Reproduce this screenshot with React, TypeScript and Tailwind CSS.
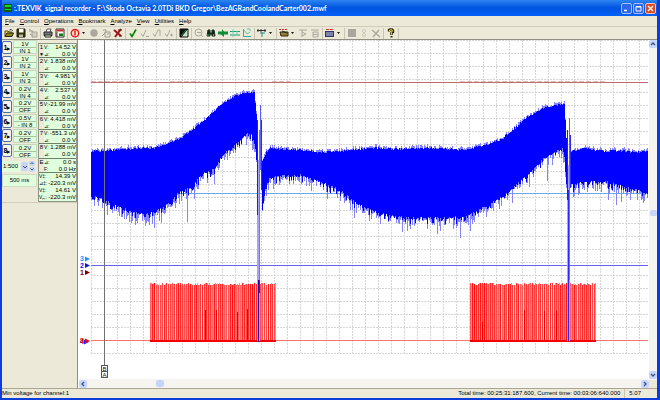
import { useMemo, useState } from "react";
import type { ReactNode } from "react";

type Point = [number, number];

const menus = ["File", "Control", "Operations", "Bookmark", "Analyze", "View", "Utilities", "Help"];

const channels = [
  { range: "1V", input: "IN 1" },
  { range: "1V", input: "IN 2" },
  { range: "1V", input: "IN 3" },
  { range: "0.2V", input: "IN 4" },
  { range: "0.2V", input: "OFF" },
  { range: "0.5V", input: "- IN 8" },
  { range: "0.2V", input: "OFF" },
  { range: "0.2V", input: "OFF" },
];

const readings = [
  { id: "1", top: ["V:", "14.52 V"], bottom: ["⊿:", "0.0 V"] },
  { id: "2", top: ["V:", "1.838 mV"], bottom: ["⊿:", "0.0 V"] },
  { id: "3", top: ["V:", "4.981 V"], bottom: ["⊿:", "0.0 V"] },
  { id: "4", top: ["V:", "2.537 V"], bottom: ["⊿:", "0.0 V"] },
  { id: "5", top: ["V:", "-21.99 mV"], bottom: ["⊿:", "0.0 V"] },
  { id: "6", top: ["V:", "4.418 mV"], bottom: ["⊿:", "0.0 V"] },
  { id: "7", top: ["V:", "-551.3 uV"], bottom: ["⊿:", "0.0 V"] },
  { id: "8", top: ["V:", "1.288 mV"], bottom: ["⊿:", "0.0 V"] },
  { id: "E", top: ["⊿:", "0.0 s"], bottom: ["F:", "0.0 Hz"] },
];

const extremes = [
  ["V‡:", "14.39 V"],
  ["⊿‡:", "-220.3 mV"],
  ["V‡:", "14.61 V"],
  ["Vₘ:", "-220.3 mV"],
];

// Envelope of the noisy blue channel, in chart units
const upper: Point[][] = [
  [[91, 152], [117, 151], [140, 149], [155, 149], [165, 145], [178, 141], [190, 132], [205, 121], [220, 106], [235, 97], [245, 94], [254, 93], [256, 115], [258, 165]],
  [[262, 162], [266, 153], [270, 149], [280, 150], [300, 151], [320, 153], [345, 152], [370, 149], [400, 150], [430, 149], [465, 151], [485, 146], [500, 141], [510, 133], [527, 118], [543, 109], [555, 106], [564, 105], [566, 138], [567, 170]],
  [[571, 153], [585, 149], [600, 152], [620, 152], [635, 153], [648, 152]],
];
const lower: Point[][] = [
  [[91, 195], [104, 198], [110, 203], [130, 210], [145, 214], [152, 212], [170, 201], [180, 190], [190, 187], [200, 175], [210, 168], [214, 169], [222, 154], [235, 144], [245, 134], [250, 132], [254, 138], [256, 160], [258, 180]],
  [[262, 209], [265, 188], [270, 176], [280, 175], [300, 174], [320, 181], [335, 187], [345, 193], [355, 202], [370, 209], [380, 213], [400, 216], [430, 217], [465, 216], [475, 210], [500, 197], [510, 189], [527, 174], [543, 158], [555, 151], [563, 147], [565, 165], [567, 196]],
  [[571, 184], [585, 181], [600, 180], [620, 184], [635, 188], [648, 194]],
];

const longSpikes: Point[] = [
  [154, 228], [146, 223], [187, 222], [194, 199], [107, 215], [437, 234], [440, 231], [460, 238],
  [453, 229], [470, 231], [474, 222], [547, 181], [529, 187], [616, 205], [512, 203], [574, 196],
];

function makeRandom(seed: number) {
  let s = seed;
  return () => {
    s = (s * 16807) % 2147483647;
    return s / 2147483647;
  };
}

function valueAt(points: Point[], x: number) {
  for (let i = 1; i < points.length; i++) {
    const [x1, y1] = points[i - 1];
    const [x2, y2] = points[i];
    if (x <= x2) return y1 + ((y2 - y1) * (x - x1)) / (x2 - x1);
  }
  return points[points.length - 1][1];
}

function buildWave() {
  const rand = makeRandom(4217);
  let solid = "";
  let fringe = "";
  upper.forEach((top, part) => {
    const bottom = lower[part];
    const end = top[top.length - 1][0];
    for (let x = top[0][0]; x < end; x++) {
      const y1 = Math.round(valueAt(top, x) - rand() * 2);
      const y2 = Math.round(valueAt(bottom, x) + rand() * rand() * 9);
      solid += `M${x} ${y1}h1V${y2}h-1z`;
      fringe += `M${x} ${y1 - Math.round(rand() * 3)}h1V${y2 + Math.round(rand() * rand() * 13)}h-1z`;
    }
  });
  longSpikes.forEach(([x, y]) => {
    fringe += `M${x} ${y - 35}h1V${y}h-1z`;
  });
  return { solid, fringe };
}

function buildPulses(start: number, end: number, seed: number) {
  const rand = makeRandom(seed);
  const bars: { x: number; y: number; opacity: number }[] = [];
  for (let x = start; x < end; x++) {
    const edge = (x - start) % 2 === 0;
    const gap = !edge && rand() > 0.68;
    const y = 283 + Math.round(rand() * 2);
    bars.push({ x, y, opacity: gap ? 0.15 : edge ? 0.6 + rand() * 0.35 : 0.45 });
  }
  return bars;
}

const columns = Array.from({ length: 43 }, (_, i) => Math.round(91 + i * 13.05) + 0.5);
const rows = Array.from({ length: 25 }, (_, i) => Math.round(40 + i * 13.05) + 0.5);

function Chart() {
  const wave = useMemo(buildWave, []);
  const pulses = useMemo(
    () => [...buildPulses(150, 276, 31), ...buildPulses(470, 596, 77)],
    []
  );

  return (
    <svg viewBox="79 40 570 339" preserveAspectRatio="xMinYMin meet" className="block w-full" shapeRendering="crispEdges">
      <g stroke="#d6d6d6" strokeDasharray="2 1">
        {columns.map((x) => (
          <path key={x} d={`M${x} 40V353`} />
        ))}
        {rows.map((y) => (
          <path key={y} d={`M91 ${y}H649`} />
        ))}
      </g>
      <path d="M91 82.5H648" stroke="#c06c6c" />
      <path d="M91 81.5H140M170 81.5h30M272 81.5h20M460 81.5H606" stroke="#e2b8b8" strokeDasharray="5 2" />
      <path d="M91 193.5H648" stroke="#6aa9ea" />
      <path d="M91 265.5H648" stroke="#6464f0" />
      <path d="M91 340.5H648" stroke="#ff7070" />
      <path d="M150 341H276M470 341H596" stroke="#f00000" strokeWidth="2" />
      {pulses.map((bar) => (
        <rect key={bar.x} x={bar.x} y={bar.y} width="1" height={341 - bar.y} fill="#ff0000" opacity={bar.opacity} />
      ))}
      <path d="M205.500 310V341M216.500 310V341M237.500 312V341M247.500 309V341M482.500 322V341M524.500 310V341M544.500 311V341M556.500 311V341" stroke="#ee0000" />
      <path d={wave.fringe} fill="#8484ff" />
      <path d={wave.solid} fill="#0000ff" />
      <path d="M257 160h3V341h-3zM567 165h3V341h-3z" fill="#a4a4ff" />
      <path d="M257.500 120V215M567.500 130V200" stroke="#1c1cff" />
      <path d="M259.500 130V280M569.500 130V280" stroke="#7070fa" />
      <path d="M260.500 105V170M569.500 118V165" stroke="#5c5cff" />
      <path d="M261.500 120V190M570.500 135V188M568.500 190V341" stroke="#2828ff" />
      <path d="M259 280V293" stroke="#2020ff" strokeWidth="2" />
      <path d="M258.500 280V342" stroke="#3000b0" />
      <path d="M104.500 40V366" stroke="#707070" />
      <g fill="#ffffff" stroke="#555555">
        <rect x="101.500" y="365.500" width="6" height="6" />
        <rect x="101.500" y="371.500" width="6" height="6" />
      </g>
      <g fontFamily="Liberation Sans, sans-serif" fontSize="6" fill="#111111" textAnchor="middle">
        <text x="104.500" y="371">B</text>
        <text x="104.500" y="377">A</text>
      </g>
      <g fontFamily="Liberation Sans, sans-serif" fontSize="7" fontWeight="700">
        <text x="80" y="261" fill="#1e90ff">3</text>
        <text x="80" y="268" fill="#1414d8">2</text>
        <text x="80" y="275" fill="#7a0000">1</text>
        <text x="80" y="344" fill="#2020ff">4</text>
        <text x="80" y="343" fill="#ff0000">8</text>
      </g>
      <g shapeRendering="auto">
        <path d="M85 256.500l5 2.500-5 2.500z" fill="#1e90ff" />
        <path d="M85 263l5 2.500-5 2.500z" fill="#1414d8" />
        <path d="M85 270l5 2.500-5 2.500z" fill="#7a0000" />
        <path d="M84 339.500l5 2.500-5 2.500z" fill="#2020ff" />
        <path d="M85 338.500l5 2.500-5 2.500z" fill="#ff0000" />
      </g>
    </svg>
  );
}

function Icon({ children }: { children: ReactNode }) {
  return (
    <svg viewBox="0 0 10 10" className="block h-[10px] w-[10px]" fill="none" strokeWidth="1">
      {children}
    </svg>
  );
}

type Tool = { name: string; icon: ReactNode; menu?: boolean };

const check = "M2 5.500l2 3L8 1.500";
const grayCheck = "M1 5.500l2 3L6 2";

const toolGroups: Tool[][] = [
  [
    { name: "Open", icon: <><path d="M1 8.500V3h3l1 1h3v1.500" fill="#e8d870" stroke="#50500a" /><path d="M1 8.500l2-3.500h6.500L8 8.500z" fill="#908020" stroke="#2c2c08" /><path d="M5.500 2q2-1.500 3 .8" stroke="#222" /></> },
    { name: "Save", icon: <><path d="M1 1h8v8H1z" fill="#34340c" stroke="#202008" /><path d="M3 1h4.500v3.500H3z" fill="#fff" /><path d="M3 6.500h4V9H3z" fill="#b8b8a8" /></> },
    { name: "Export", icon: <><path d="M4 4h5v5H4zM1 3h4M2 6l3 2" fill="#d4d0c4" stroke="#a5a397" /><path d="M1 1l4 3" stroke="#a5a397" /></> },
  ],
  [
    { name: "Print", icon: <><path d="M3 4l1-3h4L7 4" fill="#fff" stroke="#555" /><path d="M1 4h8v3.500H1z" fill="#787878" stroke="#252525" /><path d="M2 7h6v2H2z" fill="#e0e0b0" stroke="#333" /></> },
    { name: "Save picture", icon: <><path d="M1 1h8v8H1z" fill="#fff" stroke="#333" /><path d="M1.500 2.500h7" stroke="#c03030" strokeWidth="2" /><path d="M4 5.500h4V8H4z" fill="#187818" /><path d="M2 4v5" stroke="#604020" /></> },
  ],
  [
    { name: "Stop", menu: true, icon: <><circle cx="5" cy="5.200" r="3.700" stroke="#f01414" strokeWidth="1.400" /><path d="M5 2.500v5" stroke="#f01414" strokeWidth="1.500" /></> },
    { name: "Record", icon: <circle cx="5" cy="5" r="3.700" fill="#aaa89d" /> },
    { name: "Copy", icon: <path d="M4 4h5v5H4zM2 2h3v3M1 8l3-3M6 6h2" stroke="#9c9a90" /> },
    { name: "Delete", icon: <><path d="M1 2l7 6M8 1L2 9" stroke="#a01414" strokeWidth="2" /><path d="M5 2h4M6 8h3" stroke="#5c1818" /></> },
  ],
  [
    { name: "Accept", icon: <path d={check} stroke="#128812" strokeWidth="1.700" /> },
    { name: "Accept previous", icon: <path d={`${grayCheck}M6 8.500h3`} stroke="#aaa89d" /> },
    { name: "Accept all", icon: <path d={`${grayCheck}M6 2h2v6`} stroke="#aaa89d" /> },
    { name: "Accept next", icon: <path d={`${grayCheck}M6 7h3M7.500 5.500v3`} stroke="#aaa89d" /> },
  ],
  [{ name: "Invert", icon: <><path d="M1 1h8v8H1z" fill="#10100c" stroke="#111" /><path d="M8.500 1.500v7H3z" fill="#c4e4c0" /><path d="M2 8l5-6" stroke="#168046" /></> }],
  [
    { name: "Zoom out", icon: <><circle cx="4.500" cy="4.500" r="3.500" stroke="#aaa89d" /><path d="M3 4.500h4M7 7l2 2" stroke="#aaa89d" /></> },
    { name: "Find", icon: <><path d="M2 2h2v3h2V2h2l1 6H6V6H4v2H1z" fill="#14281c" stroke="#123020" /><path d="M2 6v2M7.500 6v2" stroke="#30b060" /></> },
    { name: "Jump", icon: <path d="M0 3.500h4V1l2 2.500h4v3H6V9L3 6.500H0z" fill="#108c38" /> },
    { name: "Levels", icon: <><path d="M0 3.500h10M0 7h10" stroke="#1e9c60" /><path d="M3 1v8M7 3v5" stroke="#62d6ce" /></> },
    { name: "Plot", icon: <><path d="M1.500 1v8M1 8.500h8" stroke="#30aca0" /><path d="M2 2l3 4 3-2M5 1h3v2" stroke="#5cc8a8" /></> },
  ],
  [{ name: "Measure", menu: true, icon: <><path d="M0 2.500h9M1 1v3M4 1v3M8 1v3" stroke="#343434" /><path d="M3 5h5M5 4v5" stroke="#338c8c" /></> }],
  [
    { name: "Markers", menu: true, icon: <><path d="M0 1.500h9" stroke="#d43030" strokeDasharray="2 1" /><path d="M1 4h8v4H2z" fill="#928030" stroke="#33280c" /><path d="M3 3l5 2" stroke="#222" /></> },
    { name: "Marker flag", icon: <path d="M1 2h8M4 2v7M4 4l4 2-4 2" stroke="#aaa89d" /> },
    { name: "Marker list", icon: <path d="M1 2h8M3 4h5v5H3zM3 6.500h5" stroke="#aaa89d" /> },
  ],
  [{ name: "Table", menu: true, icon: <><path d="M1 1.500h8" stroke="#d43030" strokeDasharray="3 1" /><path d="M0 3h9v6H0z" fill="#303468" /><path d="M1 5h7M1 7h7" stroke="#c8d0ec" /></> }],
  [
    { name: "Halt", icon: <path d="M1 1h8v8H1z" fill="#aaa89d" /> },
    { name: "Select", icon: <path d="M3 2h4M3 8h4M3 3l4 4M7 3L3 7" stroke="#c8c6ba" /> },
    { name: "Clear", icon: <path d="M1 2l8 7M8 2L2 9" stroke="#aaa89d" strokeWidth="1.300" /> },
  ],
  [{ name: "Help", icon: <><path d="M3 3.500V2l1-.5h2l1 1V4L5.500 5v2" stroke="#2c2800" strokeWidth="2.400" /><path d="M3.500 3V2l1-.2h1.500l.5 1-1 1.700v2" stroke="#f0dc20" /><path d="M4.500 8h2v1.500h-2z" fill="#2c2800" /></> }],
];

function TitleBar() {
  return (
    <header className="flex h-4 items-center bg-linear-to-b from-[#2c84f0] via-[#0053e1] to-[#0562f8] pl-[2px] pr-px text-white">
      <svg viewBox="0 0 8 8" className="h-2 w-2 shrink-0">
        <path d="M0 0h8v8H0z" fill="#0a5c14" />
        <path d="M1 1h6v2H1zM1 5h6v1H1z" fill="#20d030" />
      </svg>
      <h1 className="ml-[2px] flex-1 truncate font-['Lato',sans-serif] text-[7px] leading-[14px] font-bold whitespace-pre">
        :.TEXVIK  signal recorder - F:\Skoda Octavia 2.0TDi BKD Gregor\BezAGRandCoolandCarter002.mwf
      </h1>
      <div className="flex gap-px">
        <button aria-label="Minimize" className="h-[11px] w-[11px] rounded-xs border border-[#a4bff4] bg-[#2d66e6]">
          <svg viewBox="0 0 9 9" className="block"><path d="M2 6.500h3" stroke="#fff" strokeWidth="1.500" /></svg>
        </button>
        <button aria-label="Maximize" className="h-[11px] w-[11px] rounded-xs border border-[#a4bff4] bg-[#2d66e6]">
          <svg viewBox="0 0 9 9" className="block" fill="none"><path d="M2 2.500h5v4.500H2zM2 3h5" stroke="#fff" /></svg>
        </button>
        <button aria-label="Close" className="h-[11px] w-[11px] rounded-xs border border-[#f2c0b0] bg-[#dc4a24]">
          <svg viewBox="0 0 9 9" className="block"><path d="M2 2l5 5M7 2L2 7" stroke="#fff" strokeWidth="1.300" /></svg>
        </button>
      </div>
    </header>
  );
}

function Toolbar() {
  return (
    <div className="flex h-[14px] items-center border-t border-[#cfccbd] border-b border-b-[#8f8d80]">
      {toolGroups.map((group, i) => (
        <div key={i} className="flex h-[11px] items-center gap-[2px] border-r border-[#c8c5b4] px-[2px]">
          {group.map((tool) => (
            <button key={tool.name} aria-label={tool.name} className="flex items-center">
              <Icon>{tool.icon}</Icon>
              {tool.menu && (
                <svg viewBox="0 0 7 4" className="h-1 w-[7px]"><path d="M2 1h3L3.500 3z" fill="#111" /></svg>
              )}
            </button>
          ))}
        </div>
      ))}
    </div>
  );
}

function ChannelPanel() {
  const [scale, setScale] = useState("1:500");

  return (
    <div className="w-[35px] shrink-0">
      <div className="grid h-[118px] grid-rows-8">
        {channels.map((channel, i) => (
          <div key={i} className="flex items-center gap-px">
            <button className="h-[13px] w-[10px] shrink-0 rounded-xs border border-[#52709c] bg-[#f6f5f0] text-[7px] leading-[11px] font-bold whitespace-nowrap">
              {i + 1}<span className="text-[4px]">▶</span>
            </button>
            <div className="h-[14px] flex-1 border border-[#c6d8bc] bg-[#e0ffdc] text-center text-[6px] leading-[6px]">
              <div className="border-b border-[#a9c5a0]">{channel.range}</div>
              <div>{channel.input}</div>
            </div>
          </div>
        ))}
      </div>
      <div className="mt-[3px] flex h-[11px] items-center gap-px">
        <select
          aria-label="Time scale"
          value={scale}
          onChange={(e) => setScale(e.target.value)}
          className="h-[11px] w-[18px] appearance-none bg-[#e0ffdc] pl-px text-[6px]"
        >
          <option>1:500</option>
          <option>1:1000</option>
        </select>
        <span className="flex h-[9px] w-[7px] items-center justify-center rounded-xs bg-[#c5d5fa]">
          <svg viewBox="0 0 6 6" className="h-[6px] w-[6px]" fill="none"><path d="M1 2l2 2 2-2" stroke="#35527c" /></svg>
        </span>
        <div className="flex flex-col gap-px">
          <button aria-label="Zoom in" className="h-[5px] w-[6px] rounded-xs bg-[#c5d5fa]">
            <svg viewBox="0 0 6 5" className="block" fill="none"><path d="M1.500 3L3 1.500 4.500 3" stroke="#35527c" /></svg>
          </button>
          <button aria-label="Zoom out" className="h-[5px] w-[6px] rounded-xs bg-[#c5d5fa]">
            <svg viewBox="0 0 6 5" className="block" fill="none"><path d="M1.500 1.500L3 3l1.500-1.500" stroke="#35527c" /></svg>
          </button>
        </div>
      </div>
      <div className="mt-[2px] h-[13px] border border-[#d0dcc0] bg-[#e0ffdc] text-center text-[6px] leading-[11px]">500 ms</div>
    </div>
  );
}

function Readouts() {
  return (
    <div className="mt-[3px] w-[39px] shrink-0 self-start border border-[#8f9888] bg-[#e0ffdc] text-[6px] leading-[7px]">
      <div className="grid h-[129px] grid-rows-9">
        {readings.map((item) => (
          <div key={item.id} className="flex overflow-hidden border-b border-[#70806a] whitespace-nowrap">
            <div className="w-[5px] bg-[#ece9d8] text-center">
              {item.id}
              {item.id === "1" && <div className="text-[5px]">▼</div>}
            </div>
            <div className="flex-1">
              {[item.top, item.bottom].map(([label, value], i) => (
                <div key={i} className="flex justify-between">
                  <span className="text-[5px]">{label}</span>
                  <span>{value}</span>
                </div>
              ))}
            </div>
          </div>
        ))}
      </div>
      {extremes.map(([label, value], i) => (
        <div key={i} className="flex justify-between whitespace-nowrap">
          <span className="text-[5px]">{label}</span>
          <span>{value}</span>
        </div>
      ))}
    </div>
  );
}

function ScrollButton({ name, d }: { name: string; d: string }) {
  return (
    <button aria-label={name} className="flex h-2 w-2 shrink-0 items-center justify-center rounded-xs bg-[#c5d5fc]">
      <svg viewBox="0 0 8 8" className="h-2 w-2" fill="none"><path d={d} stroke="#3c557f" strokeWidth="1.300" /></svg>
    </button>
  );
}

export default function App() {
  return (
    <div className="flex min-h-screen flex-col border-r-3 border-b-2 border-l-2 border-[#0a3cdc] bg-[#ece9d8] font-['Liberation_Sans',sans-serif] text-black">
      <TitleBar />
      <nav className="flex h-[10px] items-center gap-[5px] pl-[3px] text-[6px] leading-[10px]">
        {menus.map((menu) => (
          <button key={menu}>
            <span className="underline">{menu[0]}</span>{menu.slice(1)}
          </button>
        ))}
      </nav>
      <Toolbar />

      <main className="flex flex-1">
        <aside className="flex w-[76px] shrink-0 flex-col border-r border-[#8f8d80]">
          <div className="flex gap-px border-b border-[#d2cfbf]">
            <ChannelPanel />
            <Readouts />
          </div>
        </aside>
        <section className="flex min-w-0 flex-1 flex-col bg-white pl-px">
          <div className="flex flex-1">
            <div className="min-w-0 flex-1">
              <Chart />
            </div>
            <div className="flex w-2 shrink-0 flex-col items-center justify-between bg-[#f5f4ee]">
              <ScrollButton name="Scroll up" d="M2 5l2-2 2 2" />
              <div className="mt-[6px] h-[6px] w-[7px] rounded-xs bg-[#c5d5fc]" />
              <ScrollButton name="Scroll down" d="M2 3l2 2 2-2" />
            </div>
          </div>
          <div className="flex h-[9px] items-center bg-[#f5f4ee]">
            <ScrollButton name="Scroll left" d="M5 2L3 4l2 2" />
            <div className="w-[12%]" />
            <div className="h-[7px] w-2 rounded-xs bg-[#c5d5fc]" />
            <div className="flex-1" />
            <ScrollButton name="Scroll right" d="M3 2l2 2-2 2" />
            <div className="h-2 w-2 bg-[#ece9d8]" />
          </div>
        </section>
      </main>

      <footer className="flex h-[10px] items-center justify-between border-t border-[#aaa797] text-[6px] leading-[9px]">
        <span>Min voltage for channel:1</span>
        <div className="flex pr-4">
          <span className="border-r border-[#c8c5b4] pr-1">Total time: 00:25:31:187.600, Current time: 00:03:06:640.000</span>
          <span className="pl-1">5.07</span>
        </div>
      </footer>
    </div>
  );
}
